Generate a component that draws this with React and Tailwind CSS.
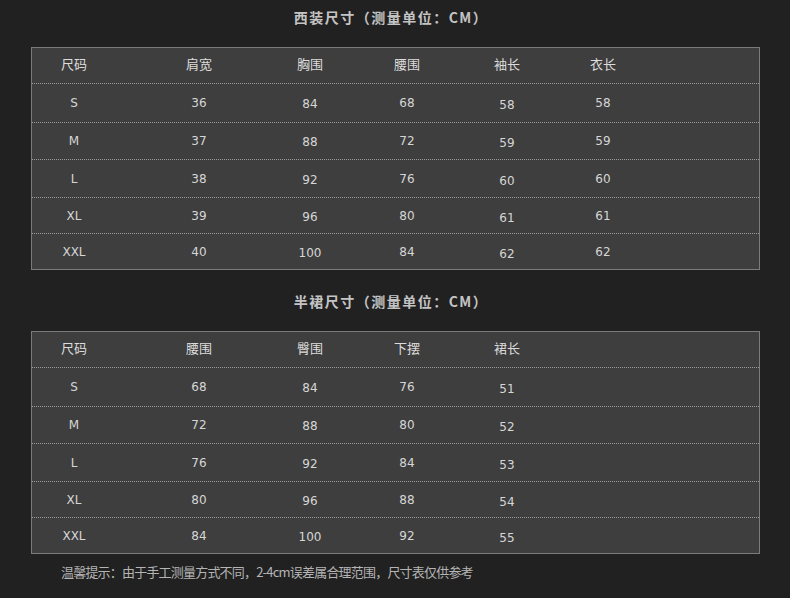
import React from "react";

const cols = "grid grid-cols-[84px_166px_56px_138px_62px_130px_1fr]";

const suit = {
  head: ["尺码", "肩宽", "胸围", "腰围", "袖长", "衣长"],
  rows: [
    { h: "h-[39px]", c: ["S", "36", "84", "68", "58", "58"] },
    { h: "h-[37px]", c: ["M", "37", "88", "72", "59", "59"] },
    { h: "h-[38px]", c: ["L", "38", "92", "76", "60", "60"] },
    { h: "h-[36px]", c: ["XL", "39", "96", "80", "61", "61"] },
    { h: "h-[35px]", c: ["XXL", "40", "100", "84", "62", "62"] },
  ],
};

const skirt = {
  head: ["尺码", "腰围", "臀围", "下摆", "裙长"],
  rows: [
    { h: "h-[39px]", c: ["S", "68", "84", "76", "51"] },
    { h: "h-[37px]", c: ["M", "72", "88", "80", "52"] },
    { h: "h-[38px]", c: ["L", "76", "92", "84", "53"] },
    { h: "h-[36px]", c: ["XL", "80", "96", "88", "54"] },
    { h: "h-[35px]", c: ["XXL", "84", "100", "92", "55"] },
  ],
};

const shift = ["", "", "translate-y-[1px]", "", "translate-y-[2px]", "", ""];

function Table({ data }) {
  return (
    <div className="mx-[31px] w-[729px] border border-[#7b7b7b] bg-[#3e3e3e]">
      <div className={`${cols} h-[36px] items-center border-b border-dotted border-[#9c9c9c] pb-[4px]`}>
        {data.head.map((t, i) => (
          <div
            key={i}
            className="text-center text-[13px] text-[#dcdcdc] font-['Noto_Sans_CJK_SC',sans-serif]"
          >
            {t}
          </div>
        ))}
      </div>
      {data.rows.map((r, ri) => (
        <div
          key={ri}
          className={`${cols} ${r.h} items-center ${
            ri < data.rows.length - 1 ? "border-b border-dotted border-[#9c9c9c]" : ""
          }`}
        >
          {r.c.map((t, i) => (
            <div
              key={i}
              className={`text-center text-[12px] text-[#d6d6d6] font-['DejaVu_Sans',sans-serif] ${shift[i]}`}
            >
              {t}
            </div>
          ))}
        </div>
      ))}
    </div>
  );
}

export default function App() {
  return (
    <div className="w-[790px] h-[598px] bg-[#212121] overflow-hidden flex flex-col">
      <div className="h-[47px] pt-[8px] flex justify-center">
        <div className="text-[14px] leading-[18px] tracking-[1.5px] font-bold text-[#c4c4c4] font-['Noto_Sans_CJK_SC',sans-serif] pr-[8px]">
          西装尺寸（测量单位：CM）
        </div>
      </div>
      <Table data={suit} />
      <div className="h-[61px] pt-[22px] flex justify-center">
        <div className="text-[14px] leading-[18px] tracking-[1.5px] font-bold text-[#c4c4c4] font-['Noto_Sans_CJK_SC',sans-serif] pr-[8px]">
          半裙尺寸（测量单位：CM）
        </div>
      </div>
      <Table data={skirt} />
      <div className="pt-[9px] pl-[61px]">
        <div className="text-[13px] leading-[18px] text-[#b4b4b4] font-['Noto_Sans_CJK_SC',sans-serif] tracking-[-0.8px]">
          温馨提示：由于手工测量方式不同，2-4cm误差属合理范围，尺寸表仅供参考
        </div>
      </div>
    </div>
  );
}
